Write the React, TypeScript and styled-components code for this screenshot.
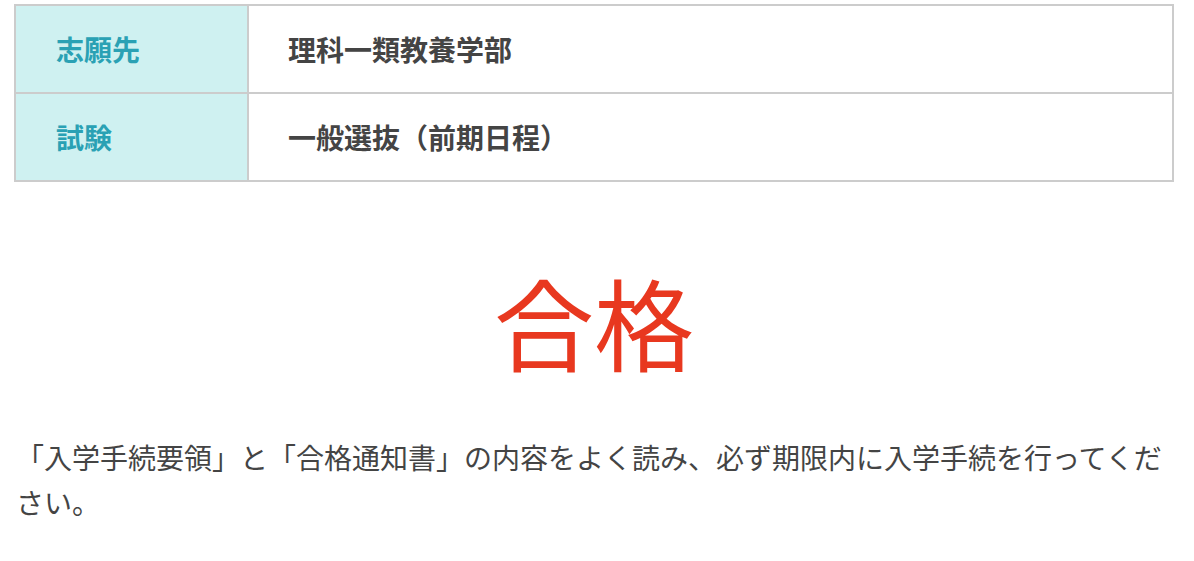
import React from 'react';
import styled, { createGlobalStyle } from 'styled-components';

const GlobalStyle = createGlobalStyle`
  html, body {
    margin: 0;
    padding: 0;
    background: #ffffff;
  }
  body {
    font-family: "Noto Sans CJK JP", "Noto Sans", sans-serif;
    color: #444444;
  }
`;

const Page = styled.div`
  width: 1160px;
  margin: 0 0 0 14px;
  padding-top: 4px;
`;

const InfoTable = styled.table`
  width: 100%;
  border-collapse: collapse;
  border: 2px solid #cccccc;
`;

const LabelCell = styled.th`
  width: 191px;
  height: 86px;
  padding: 0 0 0 40px;
  background: #cff1f1;
  border: 2px solid #cccccc;
  color: #2aa1b4;
  font-size: 28px;
  font-weight: 700;
  text-align: left;
  vertical-align: middle;
`;

const ValueCell = styled.td`
  height: 86px;
  padding: 0 0 0 39px;
  border: 2px solid #cccccc;
  color: #444444;
  font-size: 28px;
  font-weight: 700;
  vertical-align: middle;
`;

const Result = styled.div`
  margin-top: 89px;
  text-align: center;
  color: #e8381f;
  font-size: 100px;
  font-weight: 400;
  line-height: 100px;
`;

const Notice = styled.p`
  margin: 64px 0 0 2px;
  font-size: 28px;
  line-height: 45px;
  color: #444444;
`;

const rows = [
  { label: '志願先', value: '理科一類教養学部' },
  { label: '試験', value: '一般選抜（前期日程）' },
];

export default function App() {
  return (
    <>
      <GlobalStyle />
      <Page>
        <InfoTable>
          <tbody>
            {rows.map((row) => (
              <tr key={row.label}>
                <LabelCell>{row.label}</LabelCell>
                <ValueCell>{row.value}</ValueCell>
              </tr>
            ))}
          </tbody>
        </InfoTable>
        <Result>合格</Result>
        <Notice>
          「入学手続要領」と「合格通知書」の内容をよく読み、必ず期限内に入学手続を行ってください。
        </Notice>
      </Page>
    </>
  );
}
